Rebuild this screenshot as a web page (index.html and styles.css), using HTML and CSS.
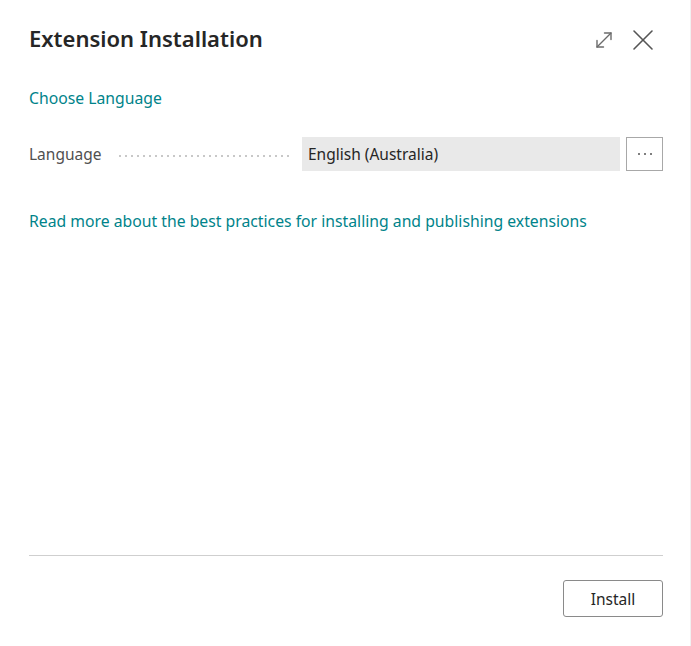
FILE: index.html
```html
<!DOCTYPE html>
<html lang="en">
<head>
<meta charset="utf-8">
<title>Extension Installation</title>
<link rel="stylesheet" href="styles.css">
</head>
<body>
<div class="dialog">
  <header class="dialog-header">
    <h1 class="dialog-title">Extension Installation</h1>
    <div class="header-actions">
      <button class="icon-btn" aria-label="Expand">
        <svg width="20" height="20" viewBox="0 0 20 20" fill="none" stroke="#6b6b6b" stroke-width="1.4" stroke-linecap="round" stroke-linejoin="round">
          <path d="M3 17 L17 3"/>
          <path d="M10.5 3 H17 V9.5"/>
          <path d="M3 10.5 V17 H9.5"/>
        </svg>
      </button>
      <button class="icon-btn" aria-label="Close">
        <svg width="22" height="22" viewBox="0 0 22 22" fill="none" stroke="#555" stroke-width="1.6" stroke-linecap="round">
          <path d="M2 2 L20 20"/>
          <path d="M20 2 L2 20"/>
        </svg>
      </button>
    </div>
  </header>

  <main class="dialog-body">
    <a class="section-link" href="#">Choose Language</a>
    <div class="field-row">
      <label class="field-label">Language</label>
      <span class="leader"></span>
      <div class="field-input">English (Australia)</div>
      <button class="lookup-btn" aria-label="Choose"><span class="dot"></span><span class="dot"></span><span class="dot"></span></button>
    </div>
    <a class="info-link" href="#">Read more about the best practices for installing and publishing extensions</a>
  </main>

  <footer class="dialog-footer">
    <button class="primary-btn">Install</button>
  </footer>
</div>
</body>
</html>
```

FILE: styles.css
```css
html, body {
  margin: 0;
  padding: 0;
  background: #ffffff;
}

body {
  font-family: "Segoe UI", "Noto Sans", "Open Sans", sans-serif;
  color: #212121;
}

.dialog {
  box-sizing: border-box;
  height: 646px;
  width: 691px;
  padding: 0 27px 0 29px;
  display: flex;
  flex-direction: column;
  border-right: 1px solid #f1f1f1;
}

.dialog-header {
  display: flex;
  align-items: center;
  justify-content: space-between;
  height: 78px;
}

.dialog-title {
  margin: 0 0 3px 0;
  font-size: 22px;
  font-weight: 600;
  color: #262626;
  letter-spacing: 0;
}

.header-actions {
  display: flex;
  align-items: center;
  gap: 18px;
  margin-right: 9px;
  margin-top: 2px;
}

.icon-btn {
  background: none;
  border: none;
  padding: 0;
  display: flex;
  cursor: pointer;
}

.dialog-body {
  flex: 1;
  display: flex;
  flex-direction: column;
}

.section-link {
  color: #00838a;
  text-decoration: none;
  font-size: 15.75px;
  margin-top: 9px;
  line-height: 22px;
  align-self: flex-start;
}

.field-row {
  display: flex;
  align-items: center;
  margin-top: 28px;
  height: 34px;
}

.field-label {
  font-size: 15.5px;
  color: #505050;
  width: 88px;
}

.leader {
  flex: 0 0 175px;
  margin-right: 10px;
  height: 2px;
  margin-top: 3px;
  background-image: radial-gradient(circle, #c8c8c8 0.8px, transparent 1px);
  background-size: 6px 2px;
  background-repeat: repeat-x;
}

.field-input {
  box-sizing: border-box;
  width: 318px;
  height: 34px;
  background: #e9e9e9;
  font-size: 15.5px;
  color: #262626;
  padding-left: 6px;
  display: flex;
  align-items: center;
}

.lookup-btn {
  box-sizing: border-box;
  width: 37px;
  height: 34px;
  margin-left: 6px;
  border: 1px solid #a8a8a8;
  background: #fff;
  padding: 0;
  display: flex;
  align-items: center;
  justify-content: center;
  gap: 4px;
}

.dot {
  width: 2px;
  height: 2px;
  background: #555;
  border-radius: 50%;
}

.info-link {
  color: #00838a;
  text-decoration: none;
  font-size: 15.75px;
  margin-top: 39px;
  line-height: 22px;
  align-self: flex-start;
}

.dialog-footer {
  border-top: 1px solid #cfcfcf;
  display: flex;
  justify-content: flex-end;
  padding: 24px 0 29px;
}

.primary-btn {
  box-sizing: border-box;
  width: 100px;
  height: 37px;
  border: 1px solid #8a8a8a;
  border-radius: 3px;
  background: #fff;
  font-family: inherit;
  font-size: 15.5px;
  color: #262626;
}
```
